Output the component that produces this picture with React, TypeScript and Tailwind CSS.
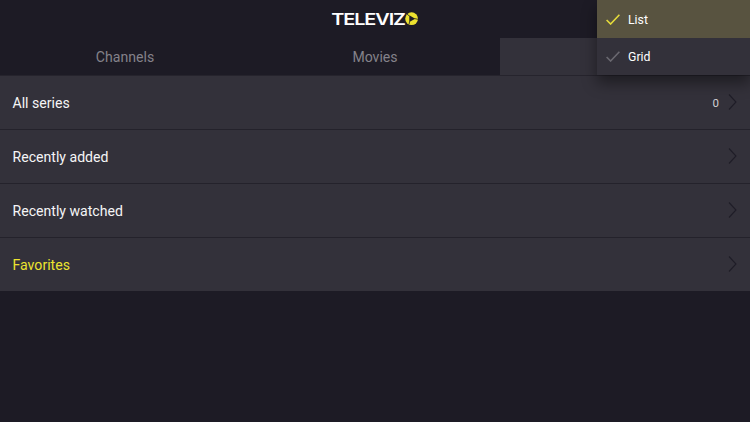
import React from "react"

const tabs = ["Channels", "Movies", ""]

const rows = [
  { label: "All series", count: "0" },
  { label: "Recently added" },
  { label: "Recently watched" },
  { label: "Favorites", highlight: true },
]

export default function App() {
  return (
    <div className="relative h-[422px] w-[750px] overflow-hidden bg-[#1d1b25] font-['Roboto',sans-serif] text-white">
      <header className="flex h-[38px] items-center justify-center">
        <Logo />
      </header>

      <nav className="grid h-[38px] grid-cols-3 border-b border-[#26242d]">
        {tabs.map((tab, i) => (
          <div
            key={i}
            className={`flex items-center justify-center pt-[3px] text-[14.1px] ${
              i === 2 ? "bg-[#33313a]" : "text-[#84828a]"
            }`}
          >
            {tab}
          </div>
        ))}
      </nav>

      <main className="bg-[#33313a]">
        {rows.map((row) => (
          <Row key={row.label} {...row} />
        ))}
      </main>

      {/* View mode menu */}
      <div className="absolute top-0 right-0 w-[153px] bg-[#33313a] shadow-[0_8px_14px_0_rgba(0,0,0,0.42)]">
        <MenuItem label="List" active />
        <MenuItem label="Grid" />
      </div>
    </div>
  )
}

function Row({ label, count, highlight }: { label: string; count?: string; highlight?: boolean }) {
  return (
    <div className="flex h-[54px] items-center border-b border-[#24222b] pr-[13px] pl-[12.5px] last:h-[53px] last:border-b-0">
      <span className={`flex-1 pt-[3px] text-[14.1px] ${highlight ? "text-[#ece32f]" : "text-[#f5f5f6]"}`}>
        {label}
      </span>
      {count && <span className="mr-[9px] pt-0.5 text-[11.5px] text-[#d0cfd3]">{count}</span>}
      <svg className="mb-0.5 h-4 w-[9px]" viewBox="0 0 9 16" fill="none" stroke="#1f1d27" strokeWidth="1.1">
        <path d="M1 .5 8 8 1 15.5" />
      </svg>
    </div>
  )
}

function MenuItem({ label, active }: { label: string; active?: boolean }) {
  return (
    <div className={`flex items-center pl-[8.5px] ${active ? "h-[38px] bg-[#585340]" : "h-[37px]"}`}>
      <svg
        className="h-[11px] w-[14px]"
        viewBox="0 0 14 11"
        fill="none"
        stroke={active ? "#e5dc3b" : "#6a6870"}
        strokeWidth="1.6"
      >
        <path d="m.6 6 4 4L13.4.8" />
      </svg>
      <span className={`ml-[8.5px] text-[12.3px] ${active ? "pt-[3px]" : "pt-0.5"}`}>{label}</span>
    </div>
  )
}

function Logo() {
  return (
    <svg className="h-5 w-[88px] overflow-visible" viewBox="0 0 88 20">
      <text
        x="0.3"
        y="15.5"
        textLength="73.6"
        lengthAdjust="spacingAndGlyphs"
        fill="#fff"
        fontFamily="Inter, sans-serif"
        fontSize="16.2"
        fontWeight="600"
        letterSpacing="-0.9"
      >
        TELEVIZ
      </text>
      <circle cx="80.6" cy="9.7" r="6.4" fill="#ece12f" />
      <path d="M78.3 6.3 84.2 9.7l-5.9 3.4z" fill="#1e1c26" />
      <path d="M78.3 7 76 5M83.5 9.6l3.6.7M78.6 12.5l-.6 3" stroke="#1e1c26" strokeWidth=".8" />
    </svg>
  )
}
